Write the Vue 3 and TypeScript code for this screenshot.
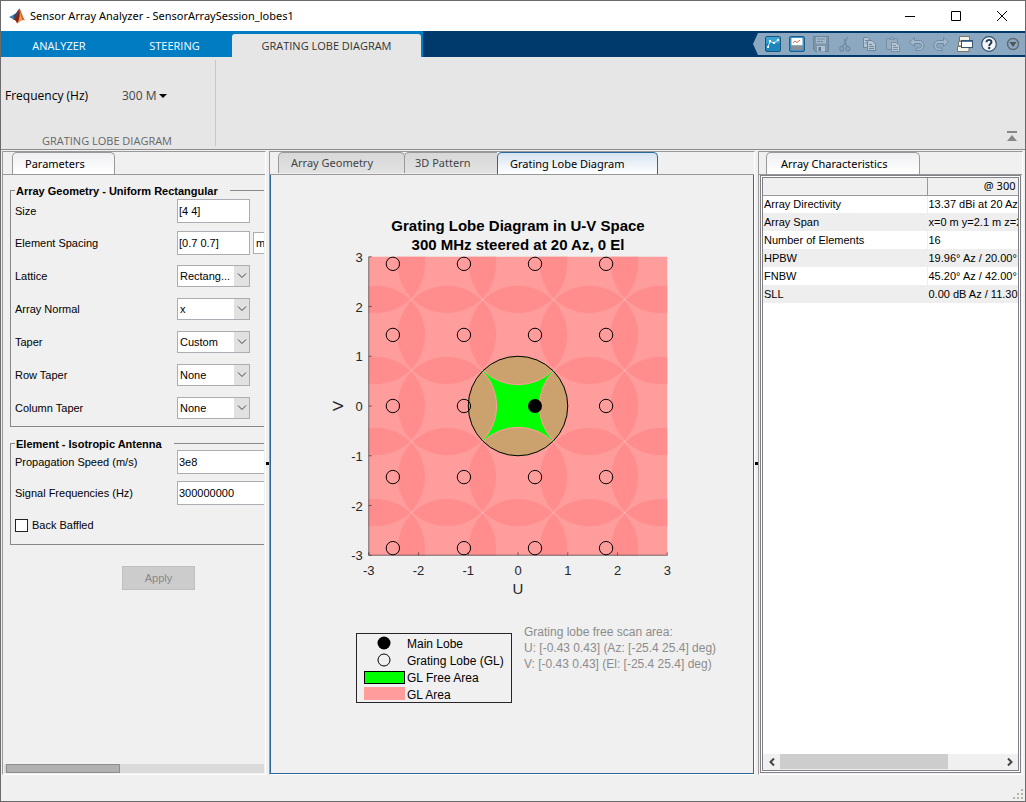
<script setup lang="ts">
import { computed, ref } from 'vue'

interface Point { x: number; y: number; key: string }

const ribbonTabs = ['ANALYZER', 'STEERING', 'GRATING LOBE DIAGRAM']
const activeRibbon = ref('GRATING LOBE DIAGRAM')
const docTabs = ['Array Geometry', '3D Pattern', 'Grating Lobe Diagram']
const activeDoc = ref('Grating Lobe Diagram')

const size = ref('[4 4]')
const spacing = ref('[0.7 0.7]')
const speed = ref('3e8')
const frequencies = ref('300000000')
const baffled = ref(false)

const selects = [
  { id: 'lattice', label: 'Lattice', value: 'Rectang...' },
  { id: 'normal', label: 'Array Normal', value: 'x' },
  { id: 'taper', label: 'Taper', value: 'Custom' },
  { id: 'row-taper', label: 'Row Taper', value: 'None' },
  { id: 'col-taper', label: 'Column Taper', value: 'None' }
]

const characteristics = [
  ['Array Directivity', '13.37 dBi at 20 Az, 0 El'],
  ['Array Span', 'x=0 m y=2.1 m z=2.1 m'],
  ['Number of Elements', '16'],
  ['HPBW', '19.96° Az / 20.00° El'],
  ['FNBW', '45.20° Az / 42.00° El'],
  ['SLL', '0.00 dB Az / 11.30 dB El']
]

/* Plot geometry: u and v run from -3 to 3 */
const unit = 49.75
const cx = 190
const cy = 152
const period = 1 / 0.7
const steer = Math.sin((20 * Math.PI) / 180)
const ticks = [-3, -2, -1, 0, 1, 2, 3]

const px = (u: number) => cx + u * unit
const py = (v: number) => cy - v * unit

const discs = computed<Point[]>(() => {
  const out: Point[] = []
  for (let m = -3; m <= 3; m++) {
    for (let n = -3; n <= 3; n++) {
      if (m !== 0 || n !== 0) out.push({ x: px(m * period), y: py(n * period), key: `${m}/${n}` })
    }
  }
  return out
})
const innerDiscs = computed(() => discs.value.filter(d => ['1/0', '-1/0', '0/1', '0/-1'].includes(d.key)))
const lobes = computed<Point[]>(() => {
  const out: Point[] = []
  for (let m = -2; m <= 1; m++) {
    for (let n = -2; n <= 2; n++) {
      if (m !== 0 || n !== 0) out.push({ x: px(steer + m * period), y: py(n * period), key: `${m}/${n}` })
    }
  }
  return out
})
</script>

<template>
  <div class="window">
    <header class="titlebar">
      <svg class="logo" viewBox="0 0 16 16" aria-hidden="true">
        <path d="M0 9 L5 6.500 L7.500 8 L4.500 11.500Z" fill="#3f7fb5" />
        <path d="M5 6.500 C7.500 5.500 8 2.500 10.500 0.500 L9 7 L6.500 10.500 L4.500 11.500Z" fill="#284c74" />
        <path d="M10.500 0.500 C12.500 3 13.500 9 16 12.500 C13.500 11 11 13 8 15.500 C7.500 13 6.500 11.800 4.500 11.500 C7.500 10 9 4 10.500 0.500Z" fill="#d9622b" />
        <path d="M10.500 0.500 C11 5 10.500 11 8 15.500 C7.500 13 6.500 11.800 4.500 11.500 C7.500 10 9 4 10.500 0.500Z" fill="#7f2416" />
        <path d="M10.500 2 C11.500 6 11 11 9 14.500 C11 12.500 12 11.500 13 11.500Z" fill="#f3a04a" />
      </svg>
      <h1>Sensor Array Analyzer - SensorArraySession_lobes1</h1>
      <div class="window-buttons">
        <button type="button" aria-label="Minimize"><svg viewBox="0 0 12 12"><path d="M1 6.500H11" /></svg></button>
        <button type="button" aria-label="Maximize"><svg viewBox="0 0 12 12"><path d="M1.500 1.500H10.500V10.500H1.500Z" /></svg></button>
        <button type="button" aria-label="Close"><svg viewBox="0 0 12 12"><path d="M1 1L11 11M11 1L1 11" /></svg></button>
      </div>
    </header>

    <nav class="ribbon-tabs">
      <div class="ribbon-tablist" role="tablist">
        <button
          v-for="t in ribbonTabs" :key="t" type="button" role="tab"
          :class="{ active: t === activeRibbon }" :aria-selected="t === activeRibbon"
          @click="activeRibbon = t"
        >{{ t }}</button>
      </div>
      <div class="quick">
        <button type="button" aria-label="New session">
          <svg viewBox="0 0 16 16"><rect x="0.500" y="0.500" width="15" height="15" rx="1.500" fill="#1f86bd" stroke="#15587f" /><path d="M1 1H15V7H1Z" fill="#3fa0d2" /><path d="M3 11L5 5.500L9 7L13 4" fill="none" stroke="#cdeaf8" /><path d="M2 10h2v2H2zM4 4h2v2H4zM8 6h2v2H8zM12 3h2v2h-2z" fill="#fff" /></svg>
        </button>
        <button type="button" aria-label="Open session">
          <svg viewBox="0 0 16 16"><rect x="0.500" y="0.500" width="15" height="15" rx="1.500" fill="#3b93c9" stroke="#1c5e8a" /><rect x="2.500" y="2" width="11" height="7.500" fill="#fff" /><path d="M4 7L6 5L8 6.500L11 4" fill="none" stroke="#d5694b" /><rect x="2.500" y="9.500" width="11" height="4.500" fill="#8a8f96" /></svg>
        </button>
        <button type="button" aria-label="Save" disabled>
          <svg viewBox="0 0 16 16"><path d="M0.500 0.500H15.500V15.500H2.500L0.500 13.500Z" fill="#7d95aa" stroke="#6c859c" /><rect x="3" y="1" width="10" height="6.500" fill="#a3b7c9" /><path d="M4 3H12M4 5.500H10" stroke="#748b9f" /><rect x="4" y="10" width="8" height="5.500" fill="#b0c1d0" /><rect x="5.500" y="11" width="2.500" height="4" fill="#627b92" /></svg>
        </button>
        <button type="button" aria-label="Cut" disabled>
          <svg viewBox="0 0 16 16" fill="none" stroke="#708aa2" stroke-width="1.300"><path d="M10.500 1L6 10.500M7 3L10 11" /><ellipse cx="4.700" cy="12.700" rx="1.900" ry="2.300" /><ellipse cx="10.800" cy="12.700" rx="1.900" ry="2.300" /></svg>
        </button>
        <button type="button" aria-label="Copy" disabled>
          <svg viewBox="0 0 16 16" fill="#b3c4d3" stroke="#6f879d"><path d="M2.500 1.500H6.500L9.500 4.500V11.500H2.500Z" /><path d="M6.500 4.500H11L14.500 8V14.500H6.500Z" /><path d="M4 4.500H6M4 7H6M8 8.500H11M8 10.500H13M8 12.500H13" /></svg>
        </button>
        <button type="button" aria-label="Paste" disabled>
          <svg viewBox="0 0 16 16" fill="#b3c4d3" stroke="#7890a6"><path d="M1.500 2.500H12.500V13.500H1.500Z" fill="#96adc2" /><path d="M4.500 3.500V2.500H6L7 0.500L8 2.500H9.500V3.500Z" /><path d="M6.500 6.500H11L14.500 9.500V15.500H6.500Z" /><path d="M8 9.500H11M8 11.500H13M8 13.500H13" /></svg>
        </button>
        <button type="button" aria-label="Undo" disabled>
          <svg viewBox="0 0 16 16"><path d="M0.500 6L5.500 1.500V4.500H10C17 4.500 16.500 15 9.500 14.500H7V12H10C13.500 12 13.500 7.500 10 7.500H5.500V10.500Z" fill="#a3b8ca" stroke="#708aa2" /></svg>
        </button>
        <button type="button" aria-label="Redo" disabled>
          <svg viewBox="0 0 16 16"><path d="M15.500 6L10.500 1.500V4.500H6C-1 4.500 -0.500 15 6.500 14.500H9V12H6C2.500 12 2.500 7.500 6 7.500H10.500V10.500Z" fill="#a3b8ca" stroke="#708aa2" /></svg>
        </button>
        <button type="button" aria-label="Switch windows">
          <svg viewBox="0 0 16 16"><g fill="#f4f3ea" stroke="#77776c"><path d="M2.500 0.500H12.500V5H2.500Z" /><path d="M1.500 5.500H6V10H1.500ZM0.500 10.500H12V15.500H0.500Z" /></g><rect x="4.500" y="4.500" width="11" height="7" fill="#fff" stroke="#38536d" /><rect x="5" y="5" width="10" height="1" fill="#4c7da8" /></svg>
        </button>
        <button type="button" aria-label="Help">
          <svg viewBox="0 0 16 16"><circle cx="8" cy="8" r="7.300" fill="#f3f6f9" stroke="#35506b" stroke-width="1.200" /><path d="M5.500 6.200C5.500 3 10.700 3.100 10.500 6.100C10.400 7.800 8.200 7.900 8.200 10" fill="none" stroke="#1e3852" stroke-width="1.900" /><circle cx="8.200" cy="12" r="1.200" fill="#1e3852" /></svg>
        </button>
        <button type="button" aria-label="More">
          <svg viewBox="0 0 16 16"><circle cx="8" cy="8" r="5.500" fill="none" stroke="#5f6870" stroke-width="1.400" /><path d="M4.500 6H11.500L8 11Z" fill="#4c5359" /></svg>
        </button>
      </div>
    </nav>

    <section class="ribbon">
      <div class="ribbon-group">
        <div class="ribbon-row">
          <span class="freq-label">Frequency (Hz)</span>
          <button type="button" class="freq">300 M<svg viewBox="0 0 8 4"><path d="M0 0H8L4 4Z" /></svg></button>
        </div>
        <h2>GRATING LOBE DIAGRAM</h2>
      </div>
      <button type="button" class="collapse" aria-label="Collapse toolstrip">
        <svg viewBox="0 0 10 10"><path d="M0 0H10V2H0ZM5 4L10 10H0Z" /></svg>
      </button>
    </section>

    <main class="work">
      <section class="panel">
        <div class="tabs"><button type="button" class="tab wide-left">Parameters</button></div>
        <div class="params">
          <form class="form" @submit.prevent>
            <div class="group">
              <h3>Array Geometry - Uniform Rectangular</h3>
              <div class="field text">
                <label for="size">Size</label><input id="size" v-model="size" type="text">
              </div>
              <div class="field text">
                <label for="spacing">Element Spacing</label><input id="spacing" v-model="spacing" type="text">
                <select class="units" aria-label="Spacing units"><option>m</option></select>
              </div>
              <div v-for="s in selects" :key="s.id" class="field">
                <label :for="s.id">{{ s.label }}</label>
                <div class="combo">
                  <select :id="s.id"><option>{{ s.value }}</option></select>
                  <svg viewBox="0 0 10 6"><path d="M1 0.500L5 4.500L9 0.500" /></svg>
                </div>
              </div>
            </div>
            <div class="group second">
              <h3>Element - Isotropic Antenna</h3>
              <div class="field text long">
                <label for="speed">Propagation Speed (m/s)</label><input id="speed" v-model="speed" type="text">
              </div>
              <div class="field text long">
                <label for="freqs">Signal Frequencies (Hz)</label><input id="freqs" v-model="frequencies" type="text">
              </div>
              <label class="check"><input v-model="baffled" type="checkbox">Back Baffled</label>
            </div>
            <button type="submit" class="apply" disabled>Apply</button>
          </form>
          <div class="thin-scroll"><div class="thin-thumb" /></div>
        </div>
      </section>

      <div class="splitter"><i /></div>

      <section class="panel doc">
        <div class="tabs" role="tablist">
          <button
            v-for="t in docTabs" :key="t" type="button" role="tab" class="tab"
            :class="{ active: t === activeDoc, idle: t !== activeDoc }" :aria-selected="t === activeDoc"
            @click="activeDoc = t"
          >{{ t }}</button>
        </div>
        <div class="canvas">
          <figure>
            <figcaption>Grating Lobe Diagram in U-V Space<br>300 MHz steered at 20 Az, 0 El</figcaption>
            <svg class="plot" viewBox="0 0 380 350" role="img" aria-label="Grating lobe diagram">
              <defs>
                <clipPath id="axes-clip"><rect :x="px(-3)" :y="py(3)" :width="unit * 6" :height="unit * 6" /></clipPath>
                <clipPath id="unit-clip"><circle :cx="cx" :cy="cy" :r="unit" /></clipPath>
              </defs>
              <g clip-path="url(#axes-clip)">
                <rect :x="px(-3)" :y="py(3)" :width="unit * 6" :height="unit * 6" fill="#fff" />
                <circle v-for="d in discs" :key="d.key" :cx="d.x" :cy="d.y" :r="unit" fill="#ff8b8b" fill-opacity="0.850" />
                <circle v-for="d in discs" :key="`e${d.key}`" :cx="d.x" :cy="d.y" :r="unit" fill="none" stroke="#ff9d9d" />
                <circle :cx="cx" :cy="cy" :r="unit" fill="#0f0" />
                <g clip-path="url(#unit-clip)">
                  <circle v-for="d in innerDiscs" :key="d.key" :cx="d.x" :cy="d.y" :r="unit" fill="#cba26e" stroke="#ff9d9d" />
                </g>
                <circle :cx="cx" :cy="cy" :r="unit" fill="none" stroke="#000" />
              </g>
              <path class="axis" :d="`M${px(-3)} ${py(3)}V${py(-3)}H${px(3)}`" />
              <g v-for="t in ticks" :key="t">
                <path class="axis" :d="`M${px(t)} ${py(-3)}v-3M${px(-3)} ${py(t)}h3`" />
                <text :x="px(t)" :y="py(-3) + 20" text-anchor="middle">{{ t }}</text>
                <text :x="px(-3) - 6" :y="py(t) + 5" text-anchor="end">{{ t }}</text>
              </g>
              <circle v-for="l in lobes" :key="l.key" :cx="l.x" :cy="l.y" r="6.700" fill="none" stroke="#000" />
              <circle :cx="px(steer)" :cy="cy" r="7" />
              <text class="name" :x="cx" :y="py(-3) + 39" text-anchor="middle">U</text>
              <text class="name" :transform="`translate(15 ${cy}) rotate(-90)`" text-anchor="middle">V</text>
            </svg>
            <div class="notes">
              <ul class="legend">
                <li><svg viewBox="0 0 42 16"><circle cx="21" cy="7" r="6.500" /></svg>Main Lobe</li>
                <li><svg viewBox="0 0 42 16"><circle cx="21" cy="7" r="6" fill="none" stroke="#000" /></svg>Grating Lobe (GL)</li>
                <li><svg viewBox="0 0 42 16"><rect x="1.500" y="1.500" width="40" height="12" fill="#0f0" stroke="#000" /></svg>GL Free Area</li>
                <li><svg viewBox="0 0 42 16"><rect x="1" y="0" width="41" height="13" fill="#ff9d9d" /></svg>GL Area</li>
              </ul>
              <p>Grating lobe free scan area:<br>U: [-0.43 0.43] (Az: [-25.4 25.4] deg)<br>V: [-0.43 0.43] (El: [-25.4 25.4] deg)</p>
            </div>
          </figure>
        </div>
      </section>

      <div class="splitter"><i /></div>

      <section class="panel">
        <div class="tabs"><button type="button" class="tab wide-right">Array Characteristics</button></div>
        <div class="results">
          <div class="table-box">
            <table>
              <thead><tr><th /><th>@ 300 MHz</th></tr></thead>
              <tbody>
                <tr v-for="row in characteristics" :key="row[0]"><td>{{ row[0] }}</td><td>{{ row[1] }}</td></tr>
              </tbody>
            </table>
          </div>
          <div class="scroll">
            <button type="button" aria-label="Scroll left"><svg viewBox="0 0 6 8"><path d="M5 0.500L1.500 4L5 7.500" /></svg></button>
            <div class="track"><div class="thumb" /></div>
            <button type="button" aria-label="Scroll right"><svg viewBox="0 0 6 8"><path d="M1 0.500L4.500 4L1 7.500" /></svg></button>
          </div>
        </div>
      </section>
    </main>

    <footer class="status">
      <svg viewBox="0 0 10 10" aria-hidden="true"><path d="M8 0h2v2H8zM4 4h2v2H4zM8 4h2v2H8zM0 8h2v2H0zM4 8h2v2H4zM8 8h2v2H8z" /></svg>
    </footer>
  </div>
</template>

<style>
body { margin: 0; }
</style>

<style scoped>
* { box-sizing: border-box; }
button, input, select { font: inherit; color: inherit; margin: 0; border-radius: 0; }
button { border: 0; padding: 0; background: none; }
svg { display: block; }

.window {
  display: flex;
  flex-direction: column;
  height: 100vh;
  overflow: hidden;
  border: 1px solid #6b6b6b;
  background: #f0f0f0;
  color: #000;
  font: 11px/16px "Noto Sans", "Open Sans", sans-serif;
}

.titlebar { display: flex; align-items: center; flex: 0 0 30px; padding-left: 8px; background: #fff; }
.logo { width: 16px; height: 16px; }
h1 { flex: 1; margin: 0 0 0 5px; font-size: 11px; font-weight: 400; white-space: nowrap; }
.window-buttons { display: flex; }
.window-buttons button { display: grid; place-items: center; width: 46px; height: 30px; }
.window-buttons svg { width: 12px; height: 12px; fill: none; stroke: #000; }

.ribbon-tabs { display: flex; justify-content: space-between; flex: 0 0 26px; background: #00396b; }
.ribbon-tablist { display: flex; align-items: flex-end; background: #007cc3; padding-right: 2px; font-family: "Open Sans", "Noto Sans", sans-serif; }
.ribbon-tablist button { width: 116px; height: 23px; color: #fff; white-space: nowrap; }
.ribbon-tablist button:nth-child(2) { width: 115px; }
.ribbon-tablist button.active { width: 189px; background: #e6e6e6; color: #333; border-radius: 3px 3px 0 0; }
.quick { display: flex; align-items: center; height: 22px; margin-top: 2px; padding-left: 8px; background: #8ca8c0; clip-path: polygon(5px 0, 100% 0, 100% 100%, 5px 100%, 0 50%); }
.quick button { display: grid; place-items: center; width: 24px; height: 22px; }
.quick svg { width: 16px; height: 16px; }

.ribbon { display: flex; justify-content: space-between; align-items: flex-end; flex: 0 0 93px; padding: 3px 8px 3px 4px; background: #e6e6e6; border-bottom: 1px solid #8c8c8c; font-family: "Open Sans", "Noto Sans", sans-serif; }
.ribbon-group { display: flex; flex-direction: column; justify-content: space-between; width: 211px; height: 86px; border-right: 1px solid #c8c8c8; }
.ribbon-row { display: flex; align-items: center; padding-top: 28px; font-size: 12px; }
.freq-label { width: 117px; white-space: nowrap; }
.freq { display: flex; align-items: center; gap: 2px; color: #444; }
.freq svg { width: 8px; height: 4px; fill: #000; }
h2 { margin: 0 0 -3px; padding-right: 6px; text-align: center; font-size: 11px; font-weight: 400; color: #666; }
.collapse svg { width: 10px; height: 10px; margin-bottom: 5px; fill: #888; }

.work { display: grid; grid-template-columns: 264px 3px minmax(0, 1fr) 3px 265px; flex: 1; min-height: 0; padding: 1px 2px 0 1px; }
.panel { display: flex; flex-direction: column; min-width: 0; min-height: 0; border: 1px solid #fff; border-left-color: #999; border-top-color: #999; }
.splitter { display: grid; place-items: center; }
.splitter i { width: 3px; height: 3px; background: #000; }

.tabs { display: flex; flex: 0 0 22px; padding-left: 9px; border-bottom: 1px solid #999; }
.tab { height: 22px; padding: 0 12px; border: 1px solid #999; border-bottom: 0; border-radius: 5px 5px 0 0; background: linear-gradient(#f0f0f4, #fff); text-align: left; white-space: nowrap; }
.doc .tabs { padding-left: 8px; }
.wide-left { width: 103px; }
.wide-right { width: 154px; margin-left: -2px; padding-left: 14px; }
.idle { width: 127px; height: 21px; color: #444; background: linear-gradient(#d8d8d8, #e2e2e2); }
.idle + .idle { width: 93px; margin-left: -1px; padding-left: 10px; border-right: 0; border-radius: 5px 0 0 0; }
.active.tab { width: 161px; border-color: #2e66a0; background: linear-gradient(#d6e4f0, #fff); }

.params { display: flex; flex-direction: column; flex: 1; min-height: 0; overflow: hidden; font: 11px/14px "Liberation Sans", Arial, sans-serif; }
.form { flex: 1; min-height: 0; margin: 0 1px 0 7px; padding-top: 15px; overflow: hidden; }
.group { width: 340px; padding: 0 0 2px 4px; border: 1px solid #888; }
.second { margin-top: 16px; }
h3 { width: max-content; margin: -7px 0 -3px 0; padding: 0 12px 0 1px; background: #f0f0f0; font-size: 11px; line-height: 14px; }
.second h3 { margin-bottom: -5px; }
.field { display: grid; grid-template-columns: 162px 73px auto; align-items: center; justify-content: start; height: 33px; }
.field.text { height: 32px; }
.field.long { grid-template-columns: 162px 140px; height: 31px; }
.field input { width: 100%; height: 24px; padding: 0 1px; border: 1px solid #abadb3; background: #fff; }
select { appearance: none; width: 100%; height: 22px; padding: 0 2px; border: 1px solid #abadb3; background: #fff; }
.units { width: 60px; margin-left: 3px; }
.combo { display: grid; grid-template-columns: 1fr 16px; align-items: center; justify-items: center; }
.combo select { grid-area: 1 / 1 / 2 / 3; background: linear-gradient(90deg, #fff 56px, #e1e1e1 56px); }
.combo svg { grid-area: 1 / 2; width: 10px; height: 6px; fill: none; stroke: #444; stroke-width: 1; pointer-events: none; }
.check { display: flex; align-items: center; gap: 4px; height: 34px; }
.check input { appearance: none; width: 13px; height: 13px; border: 1px solid #222; background: #fff; }
.apply { display: block; width: 73px; height: 24px; margin: 21px 0 0 112px; border: 1px solid #bfbfbf; background: #ccc; color: #888; }
.thin-scroll { flex: 0 0 9px; margin: 0 1px 1px; background: #dadada; }
.thin-thumb { width: 44%; height: 9px; margin-left: 2px; border: 1px solid #8e8e8e; background: #b1b1b1; }

.canvas { display: flex; flex-direction: column; align-items: center; flex: 1; min-height: 0; padding: 41px 0 0 12px; border: 1px solid #2e66a0; border-top: 0; overflow: hidden; font-family: "Liberation Sans", Arial, sans-serif; }
figure { width: 396px; margin: 0; }
figcaption { text-align: center; font-size: 15px; font-weight: 700; line-height: 19px; }
.plot { width: 380px; height: 350px; margin: 0 auto; font-size: 13px; overflow: visible; }
.plot text { fill: #262626; }
.plot .name { font-size: 15px; }
.axis { fill: none; stroke: #262626; stroke-opacity: 0.6; }
.notes { display: flex; gap: 12px; margin: 29px 0 0 36px; font-size: 12px; line-height: 16px; white-space: nowrap; }
.legend { flex: 0 0 156px; height: 70px; margin: 0; padding: 1px 0 0 6px; border: 1px solid #262626; list-style: none; }
.legend li { display: flex; align-items: center; gap: 2px; height: 17px; }
.legend svg { width: 42px; height: 16px; }
.notes p { margin: -9px 0 0; color: #8c8c8c; }

.results { display: flex; flex-direction: column; flex: 1; min-height: 0; margin: 0 1px 1px; border: 3px double #808086; background: #fff; }
.table-box { flex: 1; min-height: 0; overflow: hidden; }
table { width: 336px; table-layout: fixed; border-collapse: collapse; font: 11px/14px "Liberation Sans", Arial, sans-serif; }
th { height: 17px; padding: 0; background: #f0f0f0; border-right: 1px solid #999; border-bottom: 1px solid #999; font: 11px/16px "Noto Sans", "Open Sans", sans-serif; }
th:first-child { width: 164px; }
td { height: 18px; padding: 0 1px; white-space: nowrap; border-right: 1px solid #eee; }
tbody tr:nth-child(even) { background: #eee; }
.scroll { display: flex; flex: 0 0 16px; background: #f0f0f0; }
.scroll button { display: grid; place-items: center; width: 17px; }
.scroll svg { width: 6px; height: 8px; fill: none; stroke: #444; stroke-width: 2; }
.track { flex: 1; }
.thumb { width: 76%; height: 15px; background: #cdcdcd; }

.status { display: flex; justify-content: flex-end; align-items: flex-end; flex: 0 0 26px; padding: 2px; }
.status svg { width: 10px; height: 10px; fill: #b8b5a2; }
</style>
